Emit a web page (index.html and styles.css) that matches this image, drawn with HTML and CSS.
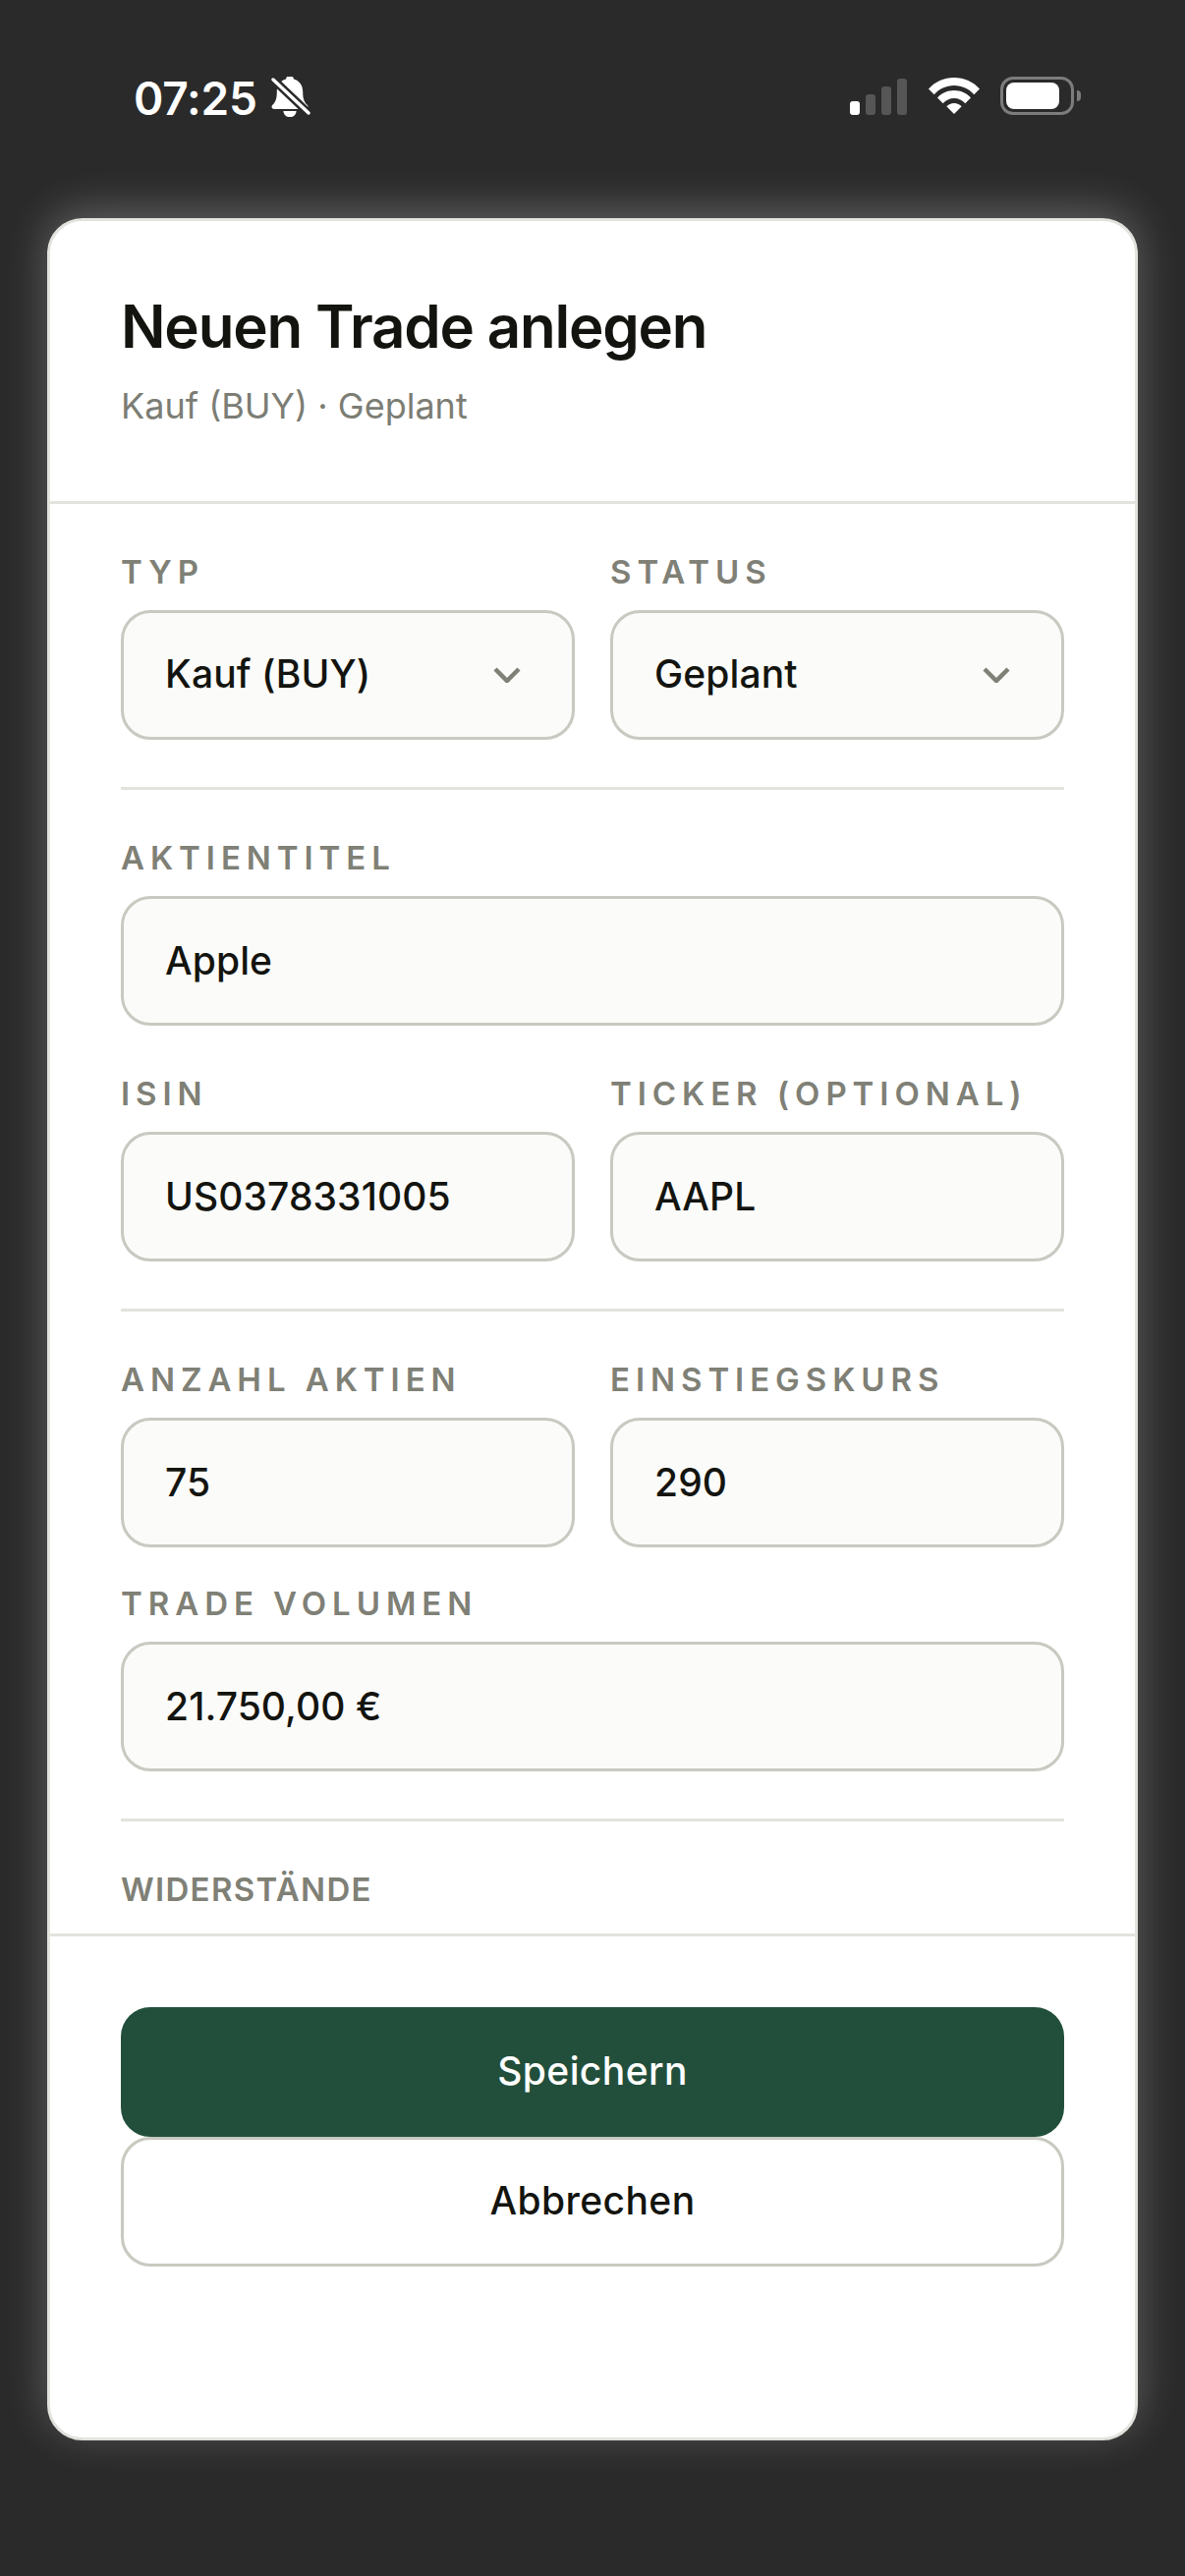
FILE: index.html
```html
<!DOCTYPE html>
<html lang="de">
    <head>
        <meta charset="UTF-8">
        <meta name="viewport" content="width=device-width, initial-scale=1.0">
        <title>Neuen Trade anlegen</title>
        <link rel="stylesheet" href="styles.css">
    </head>
    <body>
        <div class="statusbar">
            <div class="status-left">
                <span class="time">07:25</span>
                <svg class="bell" viewBox="0 0 40 41" width="40" height="41">
                    <g transform="translate(-3 -1) scale(1.1 1.03)">
                        <path fill="#fff" d="M20 0c2 0 3.400 1.400 3.600 3.400C29 5 32 10 32 16c0 6 1 10 4 13 1.500 1.500 1 4-1.500 4H5.500C3 33 2.500 30.500 4 29c3-3 4-7 4-13 0-6 3-11 8.400-12.600C16.600 1.400 18 0 20 0z"/>
                        <path fill="#fff" d="M14 35h12c0 3.500-2.500 6-6 6s-6-2.500-6-6z"/>
                    </g>
                    <path stroke="#2a2a2a" stroke-width="8.500" d="M0 1l40 38"/>
                    <path stroke="#fff" stroke-width="3.400" stroke-linecap="round" d="M2 3l36 34"/>
                </svg>
            </div>
            <div class="status-right">
                <div class="signal">
                    <span class="bar on b1"></span>
                    <span class="bar b2"></span>
                    <span class="bar b3"></span>
                    <span class="bar b4"></span>
                </div>
                <svg class="wifi" viewBox="0 0 52 37" width="52" height="37">
                    <path fill="#fff" d="M0 11.500C6.500 4.200 15.700 0 26 0s19.500 4.200 26 11.500l-5.700 5.700C41.300 11.500 34 8 26 8S10.700 11.500 5.700 17.200z"/>
                    <path fill="#fff" d="M9 20.500C13.300 15.700 19.300 13 26 13s12.700 2.700 17 7.500l-5.700 5.700C34.400 23 30.400 21 26 21s-8.400 2-11.300 5.200z"/>
                    <path fill="#fff" d="M18.300 29.300C20.300 27.300 23 26 26 26s5.700 1.300 7.700 3.300L26 37z"/>
                </svg>
                <div class="battery">
                    <div class="battery-body"><span class="battery-fill"></span></div>
                    <span class="battery-nub"></span>
                </div>
            </div>
        </div>

        <div class="card">
            <div class="card-head">
                <h1>Neuen Trade anlegen</h1>
                <p>Kauf (BUY) · Geplant</p>
            </div>

            <div class="form">
                <div class="row">
                    <div class="field">
                        <label>Typ</label>
                        <div class="input select">
                            <span>Kauf (BUY)</span>
                            <svg class="chevron" viewBox="0 0 28 16" width="28" height="16"><path d="M2 2l12 12L26 2"/></svg>
                        </div>
                    </div>
                    <div class="field">
                        <label>Status</label>
                        <div class="input select">
                            <span>Geplant</span>
                            <svg class="chevron" viewBox="0 0 28 16" width="28" height="16"><path d="M2 2l12 12L26 2"/></svg>
                        </div>
                    </div>
                </div>
                <hr>
                <div class="field">
                    <label>Aktientitel</label>
                    <div class="input">Apple</div>
                </div>
                <div class="row">
                    <div class="field">
                        <label>ISIN</label>
                        <div class="input">US0378331005</div>
                    </div>
                    <div class="field">
                        <label>Ticker (optional)</label>
                        <div class="input">AAPL</div>
                    </div>
                </div>
                <hr>
                <div class="row">
                    <div class="field">
                        <label>Anzahl Aktien</label>
                        <div class="input">75</div>
                    </div>
                    <div class="field">
                        <label>Einstiegskurs</label>
                        <div class="input">290</div>
                    </div>
                </div>
                <div class="field tight">
                    <label>Trade Volumen</label>
                    <div class="input">21.750,00 €</div>
                </div>
                <hr>
                <div class="field">
                    <label class="plain">Widerstände</label>
                </div>
            </div>

            <div class="card-foot">
                <button class="btn primary">Speichern</button>
                <button class="btn">Abbrechen</button>
            </div>
        </div>
    </body>
</html>
```

FILE: styles.css
```css
*{
    margin: 0;
    padding: 0;
    box-sizing: border-box;
}

body{
    width: 1206px;
    height: 2622px;
    overflow: hidden;
    display: flex;
    flex-direction: column;
    background-color: #2a2a2a;
    font-family: "Inter", "Liberation Sans", sans-serif;
    color: #13140f;
}

/* status bar */
.statusbar{
    height: 222px;
    flex: none;
    padding: 78px 106px 0 136px;
    display: flex;
    justify-content: space-between;
    align-items: flex-start;
}

.status-left{
    display: flex;
    align-items: center;
    gap: 14px;
    height: 41px;
}

.time{
    color: #fff;
    font-size: 46px;
    font-weight: 600;
    line-height: 41px;
    letter-spacing: -0.2px;
    padding-top: 3px;
}

.status-right{
    display: flex;
    align-items: flex-start;
}

.signal{
    display: flex;
    align-items: flex-end;
    gap: 6px;
    height: 38px;
    margin-top: 1px;
    margin-right: 22px;
}

.bar{
    width: 10px;
    border-radius: 3px;
    background: #565656;
}
.bar.on{background: #fff;}
.b1{height: 14px;}
.b2{height: 21px;}
.b3{height: 29px;}
.b4{height: 37px;}

.wifi{
    margin-top: 1px;
    margin-right: 21px;
}

.battery{
    display: flex;
    align-items: center;
    gap: 3px;
}

.battery-body{
    width: 75px;
    height: 39px;
    padding: 3px;
    border: 3px solid #7c7c7c;
    border-radius: 13px;
}

.battery-fill{
    display: block;
    width: 54px;
    height: 27px;
    background: #fff;
    border-radius: 8px;
}

.battery-nub{
    width: 4px;
    height: 11px;
    background: #7c7c7c;
    border-radius: 0 4px 4px 0;
}

/* card */
.card{
    flex: none;
    height: 2262px;
    margin: 0 48px;
    display: flex;
    flex-direction: column;
    background: #fff;
    border: 3px solid #e2e3dd;
    border-radius: 36px;
    box-shadow: 0 -8px 44px rgba(255, 255, 255, 0.26);
    overflow: hidden;
}

.card-head{
    flex: none;
    height: 288px;
    padding: 71px 72px 0;
    border-bottom: 3px solid #e2e3dd;
}

.card-head h1{
    font-size: 60px;
    font-weight: 600;
    line-height: 72px;
    letter-spacing: -1.2px;
}

.card-head p{
    margin-top: 18px;
    font-size: 36px;
    line-height: 54px;
    color: #7c7d74;
}

.form{
    flex: 1;
    min-height: 0;
    overflow: hidden;
    padding: 48px 72px 0;
    display: flex;
    flex-direction: column;
    gap: 48px;
}

.form hr{
    flex: none;
    border: 0;
    height: 3px;
    background: #e2e3dd;
}

.row{
    display: grid;
    grid-template-columns: 1fr 1fr;
    gap: 36px;
}

.field.tight{margin-top: -12px;}

.field label{
    display: block;
    height: 42px;
    margin-bottom: 18px;
    font-size: 33px;
    font-weight: 600;
    line-height: 42px;
    letter-spacing: 0.18em;
    text-transform: uppercase;
    white-space: nowrap;
    color: #7f8076;
}

.field label.plain{
    margin-bottom: 0;
    letter-spacing: 0.04em;
}

.input{
    height: 132px;
    padding: 0 42px 2px;
    display: flex;
    align-items: center;
    background: #fbfbf9;
    border: 3px solid #c8c9c0;
    border-radius: 30px;
    font-size: 39px;
    font-weight: 450;
    letter-spacing: 0.1px;
}

.select{
    justify-content: space-between;
    padding-bottom: 4px;
}

.chevron{
    fill: none;
    stroke: #7f8076;
    stroke-width: 4.500;
    margin-right: 10px;
    margin-top: 4px;
}

.card-foot{
    flex: none;
    height: 513px;
    padding: 72px 72px 0;
    border-top: 3px solid #e2e3dd;
    display: flex;
    flex-direction: column;
}

.btn{
    height: 132px;
    flex: none;
    padding-bottom: 3px;
    background: #fff;
    border: 3px solid #c8c9c0;
    border-radius: 30px;
    font-family: inherit;
    font-size: 39px;
    font-weight: 450;
    letter-spacing: 0.4px;
    color: #13140f;
}

.btn.primary{
    background: #224f3c;
    border-color: #224f3c;
    color: #fff;
}
```
